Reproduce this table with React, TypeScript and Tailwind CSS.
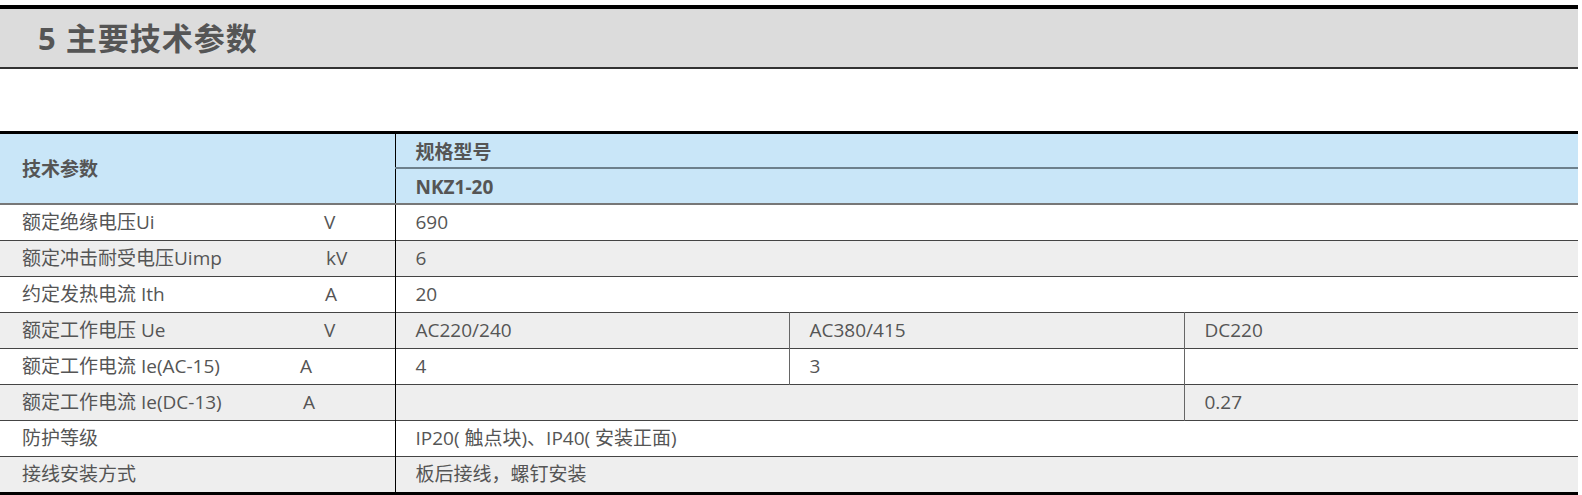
import React from "react";

const font = "font-['Open_Sans','Noto_Sans_CJK_SC',sans-serif]";

type Row = {
  label: string;
  unit?: string;
  unitAt?: string;
  cells: { text: string; span: number }[];
  gray: boolean;
};

const rows: Row[] = [
  { label: "额定绝缘电压Ui", unit: "V", unitAt: "w-[302px]", cells: [{ text: "690", span: 3 }], gray: false },
  { label: "额定冲击耐受电压Uimp", unit: "kV", unitAt: "w-[304px]", cells: [{ text: "6", span: 3 }], gray: true },
  { label: "约定发热电流 Ith", unit: "A", unitAt: "w-[303px]", cells: [{ text: "20", span: 3 }], gray: false },
  {
    label: "额定工作电压 Ue",
    unit: "V",
    unitAt: "w-[302px]",
    cells: [
      { text: "AC220/240", span: 1 },
      { text: "AC380/415", span: 1 },
      { text: "DC220", span: 1 },
    ],
    gray: true,
  },
  {
    label: "额定工作电流 Ie(AC-15)",
    unit: "A",
    unitAt: "w-[278px]",
    cells: [
      { text: "4", span: 1 },
      { text: "3", span: 1 },
      { text: "", span: 1 },
    ],
    gray: false,
  },
  {
    label: "额定工作电流 Ie(DC-13)",
    unit: "A",
    unitAt: "w-[281px]",
    cells: [
      { text: "", span: 2 },
      { text: "0.27", span: 1 },
    ],
    gray: true,
  },
  { label: "防护等级", cells: [{ text: "IP20( 触点块)、IP40( 安装正面)", span: 3 }], gray: false },
  { label: "接线安装方式", cells: [{ text: "板后接线，螺钉安装", span: 3 }], gray: true },
];

export default function App() {
  return (
    <div className={`w-[1578px] bg-white ${font} text-[#555]`}>
      <div className="mt-[5px] h-[64px] border-t-[4px] border-b-[2px] border-t-black border-b-[#333] bg-[#dcdcdc] flex items-center pl-[38px] text-[31px] font-bold tracking-[1px]">
        5 主要技术参数
      </div>
      <div className="h-[62px]" />
      <div className="border-t-[3px] border-b-[4px] border-black">
        <table className="w-full table-fixed border-collapse text-[19px]">
          <colgroup>
            <col className="w-[395px]" />
            <col className="w-[394px]" />
            <col className="w-[395px]" />
            <col className="w-[394px]" />
          </colgroup>
          <tbody>
            <tr>
              <td
                rowSpan={2}
                className="bg-[#c9e6f8] pl-[22px] pt-[2px] font-bold align-middle border-r border-r-black"
              >
                技术参数
              </td>
              <td
                colSpan={3}
                className="h-[34px] bg-[#c9e6f8] pl-[20px] pt-[3px] font-bold border-b-2 border-b-[#6d808c] leading-none"
              >
                规格型号
              </td>
            </tr>
            <tr>
              <td colSpan={3} className="h-[36px] bg-[#c9e6f8] pl-[20px] pt-[2px] font-bold leading-none">
                NKZ1-20
              </td>
            </tr>
            {rows.map((r, i) => (
              <tr
                key={i}
                className={`${r.gray ? "bg-[#eeeeee]" : "bg-white"} ${
                  i === 0 ? "border-t-2 border-t-[#777]" : "border-t border-t-[#444]"
                }`}
              >
                <td className="h-[36px] pl-[22px] pt-[1px] border-r border-r-black leading-none whitespace-nowrap">
                  <div className="flex items-center">
                    <span className={r.unitAt ?? ""}>{r.label}</span>
                    {r.unit && <span>{r.unit}</span>}
                  </div>
                </td>
                {r.cells.map((c, j) => (
                  <td
                    key={j}
                    colSpan={c.span}
                    className={`pl-[20px] pt-[1px] leading-none whitespace-nowrap ${
                      j < r.cells.length - 1 ? "border-r border-r-[#666]" : ""
                    }`}
                  >
                    {c.text}
                  </td>
                ))}
              </tr>
            ))}
          </tbody>
        </table>
      </div>
    </div>
  );
}
